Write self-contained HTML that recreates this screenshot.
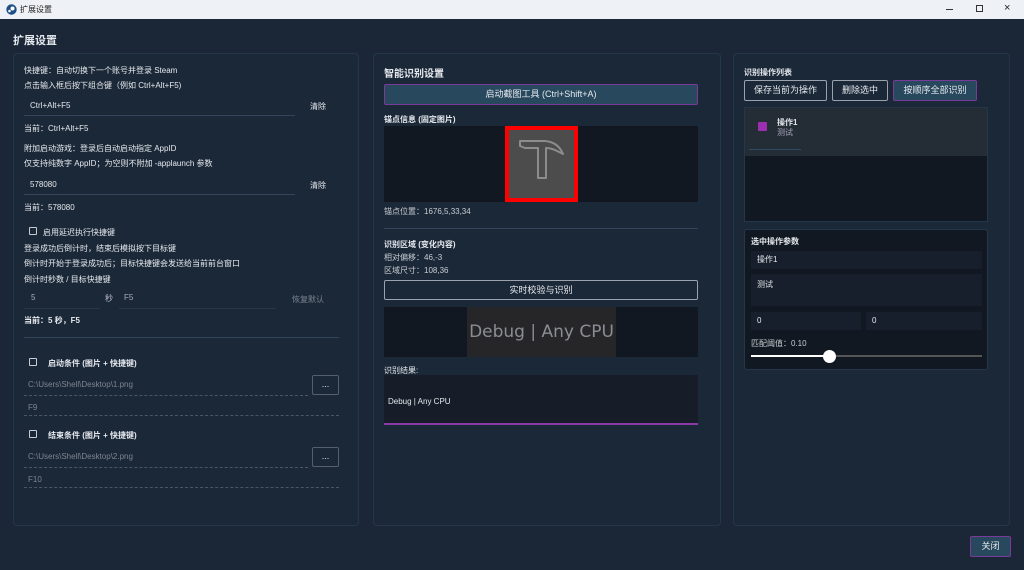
<!DOCTYPE html>
<html><head><meta charset="utf-8"><style>
*{box-sizing:border-box;margin:0;padding:0}
body{width:1024px;height:570px;overflow:hidden;background:#1b2737;font-family:"Liberation Sans","Noto Sans CJK SC",sans-serif;color:#e6e9ee;position:relative;font-size:8px}
.a{position:absolute;white-space:nowrap}
.tb{position:absolute;left:0;top:0;width:1024px;height:19px;background:#eef1f6;color:#222;font-size:8px}
.panel{position:absolute;border:1px solid #26364a;border-radius:4px;background:#1b2838}
.ln{position:absolute;height:1px;background:#33455a}
.dl{position:absolute;height:0;border-top:1px dashed #4a5666}
.cb{position:absolute;width:8px;height:8px;border:1px solid #c8ccd2;border-radius:1px}
.btn{position:absolute;border:1px solid #9aa3ad;border-radius:2px;text-align:center;color:#e6e9ee;font-size:9px}
.dark{position:absolute;background:#111821}
.inp{position:absolute;background:#161f2b;color:#e6e9ee;padding-left:6px}
</style></head><body>
<div class="tb">
<svg class="a" style="left:6px;top:4px" width="11" height="11" viewBox="0 0 11 11"><circle cx="5.5" cy="5.5" r="5.2" fill="#1b4f86"/><circle cx="6.5" cy="4.5" r="2" fill="#fff"/><circle cx="3.5" cy="7" r="1.3" fill="#fff"/></svg>
<div class="a" style="left:20px;top:4px">扩展设置</div>
<div class="a" style="left:946px;top:9px;width:7px;height:1px;background:#333"></div>
<div class="a" style="left:976px;top:5px;width:7px;height:7px;border:1px solid #333"></div>
<div class="a" style="left:1004px;top:2px;font-size:11px">×</div>
</div>
<div class="a" style="left:13px;top:32px;font-size:11px;font-weight:bold">扩展设置</div>

<div class="panel" style="left:13px;top:53px;width:346px;height:473px"></div>
<div class="a" style="left:24px;top:65px">快捷键：自动切换下一个账号并登录 Steam</div>
<div class="a" style="left:24px;top:80px">点击输入框后按下组合键（例如 Ctrl+Alt+F5)</div>
<div class="a" style="left:30px;top:101px">Ctrl+Alt+F5</div>
<div class="ln" style="left:24px;top:115px;width:271px"></div>
<div class="a" style="left:310px;top:101px">清除</div>
<div class="a" style="left:24px;top:123px">当前：Ctrl+Alt+F5</div>
<div class="a" style="left:24px;top:143px">附加启动游戏：登录后自动启动指定 AppID</div>
<div class="a" style="left:24px;top:158px">仅支持纯数字 AppID；为空则不附加 -applaunch 参数</div>
<div class="a" style="left:30px;top:180px">578080</div>
<div class="ln" style="left:24px;top:194px;width:271px"></div>
<div class="a" style="left:310px;top:180px">清除</div>
<div class="a" style="left:24px;top:202px">当前：578080</div>
<div class="cb" style="left:29px;top:227px"></div>
<div class="a" style="left:43px;top:227px">启用延迟执行快捷键</div>
<div class="a" style="left:24px;top:243px">登录成功后倒计时，结束后模拟按下目标键</div>
<div class="a" style="left:24px;top:258px">倒计时开始于登录成功后；目标快捷键会发送给当前前台窗口</div>
<div class="a" style="left:24px;top:274px">倒计时秒数 / 目标快捷键</div>
<div class="a" style="left:31px;top:293px;color:#aab">5</div>
<div class="ln" style="left:24px;top:308px;width:76px;background:#2a3646"></div>
<div class="a" style="left:105px;top:293px;color:#bbc">秒</div>
<div class="a" style="left:124px;top:293px;color:#aab">F5</div>
<div class="ln" style="left:119px;top:308px;width:157px;background:#2a3646"></div>
<div class="a" style="left:292px;top:294px;color:#7d8590">恢复默认</div>
<div class="a" style="left:24px;top:315px;font-weight:bold">当前：5 秒，F5</div>
<div class="ln" style="left:24px;top:337px;width:315px"></div>
<div class="cb" style="left:29px;top:358px"></div>
<div class="a" style="left:48px;top:358px;font-weight:bold">启动条件 (图片 + 快捷键)</div>
<div class="a" style="left:28px;top:380px;color:#7d8590">C:\Users\Shell\Desktop\1.png</div>
<div class="dl" style="left:24px;top:395px;width:284px"></div>
<div class="btn" style="left:312px;top:375px;width:27px;height:20px;border-color:#55606c;line-height:16px">...</div>
<div class="a" style="left:28px;top:403px;color:#7d8590">F9</div>
<div class="dl" style="left:24px;top:415px;width:315px"></div>
<div class="cb" style="left:29px;top:430px"></div>
<div class="a" style="left:48px;top:430px;font-weight:bold">结束条件 (图片 + 快捷键)</div>
<div class="a" style="left:28px;top:452px;color:#7d8590">C:\Users\Shell\Desktop\2.png</div>
<div class="dl" style="left:24px;top:467px;width:284px"></div>
<div class="btn" style="left:312px;top:447px;width:27px;height:20px;border-color:#55606c;line-height:16px">...</div>
<div class="a" style="left:28px;top:475px;color:#7d8590">F10</div>
<div class="dl" style="left:24px;top:487px;width:315px"></div>

<div class="panel" style="left:373px;top:53px;width:348px;height:473px"></div>
<div class="a" style="left:384px;top:65px;font-size:10px;font-weight:bold">智能识别设置</div>
<div class="btn" style="left:384px;top:84px;width:314px;height:21px;background:#28485e;border-color:#7a3a9a;line-height:19px">启动截图工具 (Ctrl+Shift+A)</div>
<div class="a" style="left:384px;top:114px;font-weight:bold">锚点信息 (固定图片)</div>
<div class="dark" style="left:384px;top:126px;width:314px;height:76px"></div>
<div class="a" style="left:505px;top:126px;width:73px;height:76px;border:4px solid #f00;background:#4c4c4c"></div>
<svg class="a" style="left:505px;top:126px" width="73" height="76" viewBox="0 0 73 76"><path d="M15 15 L40 15 Q53 16 58 28 L50 24 Q45 22 41 22 L41 52 L33 52 L33 22 L20 22 L15 20 Z" fill="none" stroke="#8c8c8c" stroke-width="2" stroke-linejoin="round"/></svg>
<div class="a" style="left:384px;top:206px;color:#c8ccd2">锚点位置：1676,5,33,34</div>
<div class="ln" style="left:384px;top:228px;width:314px"></div>
<div class="a" style="left:384px;top:239px;font-weight:bold">识别区域 (变化内容)</div>
<div class="a" style="left:384px;top:252px;color:#c8ccd2">相对偏移：46,-3</div>
<div class="a" style="left:384px;top:265px;color:#c8ccd2">区域尺寸：108,36</div>
<div class="btn" style="left:384px;top:280px;width:314px;height:20px;line-height:18px">实时校验与识别</div>
<div class="dark" style="left:384px;top:307px;width:314px;height:50px"></div>
<div class="a" style="left:467px;top:307px;width:149px;height:50px;background:#262628;color:#8a8e94;font-size:17px;line-height:50px;text-align:center;font-family:'DejaVu Sans',sans-serif">Debug | Any CPU</div>
<div class="a" style="left:384px;top:365px">识别结果:</div>
<div class="a" style="left:384px;top:375px;width:314px;height:50px;background:#161d29;border-bottom:2px solid #8a3aa6"></div>
<div class="a" style="left:388px;top:397px">Debug | Any CPU</div>

<div class="panel" style="left:733px;top:53px;width:277px;height:473px"></div>
<div class="a" style="left:744px;top:67px;font-weight:bold">识别操作列表</div>
<div class="btn" style="left:744px;top:80px;width:83px;height:21px;line-height:19px">保存当前为操作</div>
<div class="btn" style="left:832px;top:80px;width:56px;height:21px;line-height:19px">删除选中</div>
<div class="btn" style="left:893px;top:80px;width:84px;height:21px;line-height:19px;background:#28485e;border-color:#7a3a9a">按顺序全部识别</div>
<div class="a" style="left:744px;top:107px;width:244px;height:115px;background:#111821;border:1px solid #26364a"></div>
<div class="a" style="left:745px;top:108px;width:242px;height:48px;background:#242c36"></div>
<div class="a" style="left:758px;top:122px;width:9px;height:9px;background:#9b2fb0;border-radius:1px"></div>
<div class="a" style="left:777px;top:117px;font-weight:bold">操作1</div>
<div class="a" style="left:777px;top:127px;color:#aab">测试</div>
<div class="ln" style="left:749px;top:149px;width:52px;background:#2f4a66"></div>
<div class="a" style="left:744px;top:229px;width:244px;height:141px;background:#111821;border:1px solid #26364a;border-radius:3px"></div>
<div class="a" style="left:751px;top:236px;font-weight:bold">选中操作参数</div>
<div class="inp" style="left:751px;top:251px;width:231px;height:18px;line-height:18px">操作1</div>
<div class="inp" style="left:751px;top:274px;width:231px;height:32px;padding-top:5px">测试</div>
<div class="inp" style="left:751px;top:312px;width:110px;height:18px;line-height:18px">0</div>
<div class="inp" style="left:866px;top:312px;width:116px;height:18px;line-height:18px">0</div>
<div class="a" style="left:751px;top:338px;color:#c8ccd2">匹配阈值：0.10</div>
<div class="a" style="left:751px;top:355px;width:231px;height:2px;background:#555"></div>
<div class="a" style="left:751px;top:355px;width:78px;height:2px;background:#fff"></div>
<div class="a" style="left:823px;top:350px;width:13px;height:13px;border-radius:50%;background:#fff"></div>

<div class="btn" style="left:970px;top:536px;width:41px;height:21px;background:#28485e;border-color:#7a3a9a;line-height:19px">关闭</div>
</body></html>
